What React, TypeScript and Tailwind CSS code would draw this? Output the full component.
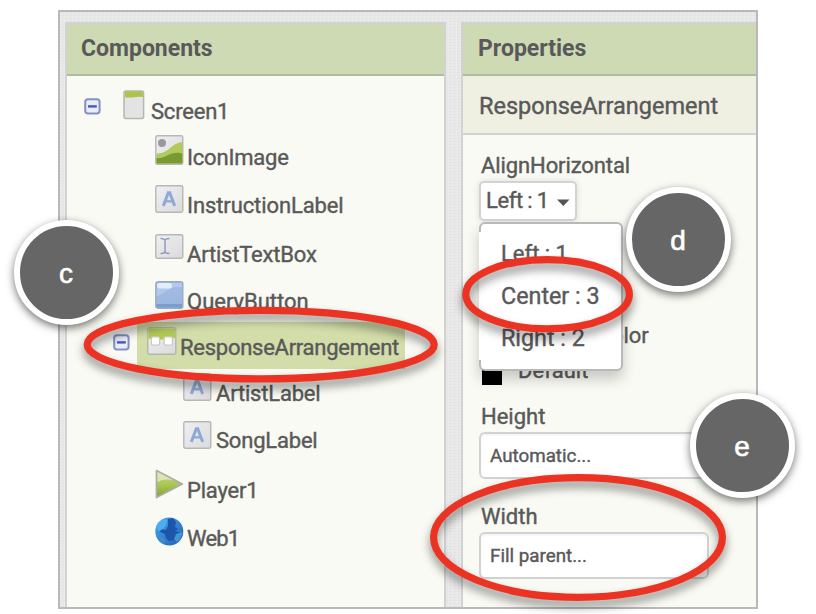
import React from "react";

const FrameBox = ({ h = 28 }: { h?: number }) => (
  <rect x="0.8" y="0.8" width="27" height={h - 1.6} rx="1.6" fill="url(#greyFill)" stroke="#b7b7b9" strokeWidth="1.4" />
);

function Icon({ kind }: { kind: string }) {
  switch (kind) {
    case "screen":
      return (
        <svg width="22" height="30" viewBox="0 0 22 30">
          <rect x="1" y="1" width="19.6" height="27.6" rx="2" fill="#e3e3e3" stroke="#b5b6b0" strokeWidth="1.5" />
          <path d="M2 1.5H19.8V7Q15 6.5 11 7.2Q6 8 2 7.2Z" fill="#adc44c" />
        </svg>
      );
    case "image":
      return (
        <svg width="29" height="30" viewBox="0 0 29 30">
          <FrameBox h={30} />
          <circle cx="7" cy="8" r="4" fill="#9a9a9a" />
          <path d="M1.5 18.5C8 19 13 15 17 11.5C21 8.500 24 7.500 27.300 7V28.300H1.500Z" fill="#b0ca5b" />
          <path d="M1.500 23C8 24 12 20 17 18.500C21 17.500 25 17.500 27.300 18.500V28.500H1.500Z" fill="#789a31" />
        </svg>
      );
    case "label":
      return (
        <svg width="29" height="28" viewBox="0 0 29 28">
          <FrameBox />
          <g fill="none" stroke="#8fa9d6" strokeWidth="3">
            <line x1="8.300" y1="21" x2="13.700" y2="6.500" />
            <line x1="14.300" y1="6.500" x2="19.700" y2="21" />
            <line x1="10" y1="16.300" x2="18" y2="16.300" strokeWidth="2.300" />
          </g>
        </svg>
      );
    case "textbox":
      return (
        <svg width="29" height="25" viewBox="0 0 29 25">
          <FrameBox h={25} />
          <path d="M5.500 4.500Q9 4.500 10 6Q11 4.500 14.500 4.500M10 6V18M5.500 19.500Q9 19.500 10 18Q11 19.500 14.500 19.500" fill="none" stroke="#8c9dbb" strokeWidth="1.500" />
        </svg>
      );
    case "button":
      return (
        <svg width="29" height="28" viewBox="0 0 29 28">
          <rect x="0.800" y="0.800" width="27" height="26.400" rx="2" fill="url(#blueFill)" stroke="#9aaac4" strokeWidth="1.400" />
          <path d="M1.500 15C8 14 12 8 20 6H27V2H2Z" fill="#bdd0ee" opacity=".65" />
          <rect x="2" y="2" width="15" height="5.500" rx="2.700" fill="#e3ecfa" />
          <rect x="1.500" y="23" width="25.600" height="3.500" fill="#7a9dd1" />
        </svg>
      );
    case "arrangement":
      return (
        <svg width="30" height="28" viewBox="0 0 30 28">
          <rect x="0.800" y="0.800" width="28" height="26.400" rx="2" fill="url(#greyFill)" stroke="#b3b7a8" strokeWidth="1.400" />
          <path d="M1.500 1.500H28V11Q22 12 15 12.500Q8 14 1.500 11.500Z" fill="#b2c954" />
          <rect x="3.800" y="9.300" width="9.400" height="9.400" rx="2" fill="#c9cbc2" />
          <rect x="16.600" y="9.300" width="9.400" height="9.400" rx="2" fill="#c9cbc2" />
          <rect x="5" y="10.500" width="7" height="7" rx="1" fill="#fff" />
          <rect x="17.800" y="10.500" width="7" height="7" rx="1" fill="#fff" />
        </svg>
      );
    case "player":
      return (
        <svg width="29" height="30" viewBox="0 0 29 30">
          <path d="M1.500 1.500L27.300 15L1.500 28.500Z" fill="url(#playFill)" stroke="#abaea5" strokeWidth="1.700" strokeLinejoin="round" />
          <path d="M2.500 3L19 11.500Q10 9 2.500 13Z" fill="#e9f0d0" opacity=".7" />
        </svg>
      );
    default:
      return (
        <svg width="29" height="29" viewBox="0 0 29 29">
          <circle cx="14.300" cy="14.500" r="14" fill="url(#globeFill)" />
          <path d="M13 2L18 1L21 5L20 10L23 12L20 14L26 16L22 18L20 23L14 24L11 21L10 17L5 15L6 12L11 13L13 9Z" fill="#1d55a8" />
          <path d="M1 11L4 14L8 12L11 8L12 3L9 2Q2 5 1 11Z" fill="#4baef3" />
          <path d="M21 17L27 15Q27 21 22 25L19 22Z" fill="#4194d6" />
          <path d="M3 19L9 22L11 26L8 26Q4 23 3 19Z" fill="#3a8fd4" />
        </svg>
      );
  }
}

const Toggle = () => (
  <svg width="17" height="17" viewBox="0 0 17 17">
    <rect x="1.200" y="1.200" width="14.400" height="14.400" rx="2.800" fill="#e9ecf5" stroke="#8391c4" strokeWidth="2" />
    <line x1="4" y1="8.400" x2="12.800" y2="8.400" stroke="#4357cc" strokeWidth="2.400" />
  </svg>
);

// Row height and indent, icon column, optional expander and text tracking for each tree entry.
const rows = [
  { name: "Screen1", kind: "screen", row: "h-[50px] pl-[17px]", icon: "w-[28px] mb-[6px]", toggle: "w-[39px] mb-[11px]", text: "tracking-[-0.2px]" },
  { name: "IconImage", kind: "image", row: "h-[46px] pl-[88px]", icon: "w-[32px] mb-[7px]", text: "tracking-[-0.2px]" },
  { name: "InstructionLabel", kind: "label", row: "h-[48px] pl-[88px]", icon: "w-[32px] mb-[7px]", text: "tracking-[-0.1px]" },
  { name: "ArtistTextBox", kind: "textbox", row: "h-[49px] pl-[88px]", icon: "w-[32px] mb-[10px]", text: "tracking-[-0.2px]" },
  { name: "QueryButton", kind: "button", row: "h-[47px] pl-[88px]", icon: "w-[32px] mb-[7px]", text: "" },
  { name: "ResponseArrangement", kind: "arrangement", row: "h-[53px] pl-[46px]", icon: "w-[33px] mb-[7px]", toggle: "w-[24px] mb-[18px]", selected: true, text: "tracking-[-0.26px]" },
  { name: "ArtistLabel", kind: "label", row: "h-[39px] pl-[116px]", icon: "w-[33px] mb-[7px]", text: "tracking-[-0.2px]" },
  { name: "SongLabel", kind: "label", row: "h-[47px] pl-[116px]", icon: "w-[33px] mb-[6px]", text: "tracking-[-0.2px]" },
  { name: "Player1", kind: "player", row: "h-[50px] pl-[88px]", icon: "w-[32px] mb-[6px]", text: "tracking-[-0.2px]" },
  { name: "Web1", kind: "web", row: "h-[48px] pl-[88px]", icon: "w-[32px] mb-[7px]", text: "tracking-[-0.8px]" },
];

const Callout = ({ letter, place }: { letter: string; place: string }) => (
  <div className={`absolute flex h-[105px] w-[105px] items-center justify-center rounded-full border-[6.5px] border-white bg-[#666] pt-[3px] pr-px font-['Liberation_Sans',sans-serif] text-[28px] text-white shadow-[0_3px_9px_rgba(0,0,0,0.55)] [-webkit-text-stroke:0.6px] ${place}`}>
    {letter}
  </div>
);

const SizeField = ({ value }: { value: string }) => (
  <div className="mt-px flex h-[47px] w-[230px] items-center rounded-[6px] border-2 border-[#d2d2d2] bg-white pl-[9px] text-[18.8px] shadow-[inset_0_2px_2px_rgba(0,0,0,0.04)]">{value}</div>
);

export default function App() {
  return (
    <div className="relative h-[614px] w-[816px] overflow-hidden bg-white pl-[58px] pt-[10px] font-['Roboto',sans-serif] text-[22px] leading-[28px] text-[#595959] [-webkit-text-stroke:0.4px]">
      <div className="flex h-[599px] w-[700px] border-2 border-[#b9b9b9] bg-[#e8e8e8] bg-[repeating-linear-gradient(0deg,rgba(0,0,0,0.02)_0_1px,transparent_1px_3px),repeating-linear-gradient(90deg,rgba(255,255,255,0.2)_0_1px,transparent_1px_4px)] pl-[5px] pt-[10px]">
        <section className="w-[381px] shrink-0 border-x-2 border-t-2 border-[#d2d2d2] bg-[#f9faf3]">
          <h2 className="h-[52px] border-b-2 border-[#b4b9a5] bg-[#cedab3] pl-[14px] pt-[11px] text-[23px] font-bold [-webkit-text-stroke:0px]">Components</h2>
          <ul>
            {rows.map((r) => (
              <li key={r.name} className={`flex items-end ${r.row}`}>
                {r.toggle && <span className={`shrink-0 ${r.toggle}`}><Toggle /></span>}
                <div className={r.selected ? "flex h-[47px] w-[268px] items-end bg-[#d3dda9] pb-[7px] pl-[10px]" : "flex items-end"}>
                  <span className={`shrink-0 ${r.icon}`}><Icon kind={r.kind} /></span>
                  <span className={`whitespace-nowrap ${r.text}`}>{r.name}</span>
                </div>
              </li>
            ))}
          </ul>
        </section>

        <section className="ml-[15px] flex-1 border-l-2 border-t-2 border-[#d2d2d2] bg-[#f9faf3]">
          <h2 className="h-[52px] border-b-2 border-[#b4b9a5] bg-[#cedab3] pl-[15px] pt-[11px] text-[23px] font-bold [-webkit-text-stroke:0px]">Properties</h2>
          <div className="h-[59px] border-b-2 border-[#d2d2d0] bg-[#eff0e1] pl-[16px] pt-[16px] text-[23.5px]">ResponseArrangement</div>
          <div className="pl-[16px] pt-[17px]">
            <div className="h-[29px] pl-[2px] tracking-[-0.1px]">AlignHorizontal</div>
            <button className="flex h-[40px] w-[98px] items-center rounded-[5px] border-2 border-[#d3d3d3] bg-white pl-[5px] shadow-[0_0_6px_rgba(0,0,0,0.12)]">
              <span className="w-[71px] whitespace-nowrap text-left tracking-[-0.4px] [word-spacing:-0.5px]">Left : 1</span>
              <svg className="mt-[4px] shrink-0" width="13" height="8" viewBox="0 0 13 8"><path d="M0 .5H12.500L6.300 7Z" fill="#555" /></svg>
            </button>
            <div className="mt-[101px] h-[28px] w-[166px] pl-[2px] text-right tracking-[-0.1px]">BackgroundColor</div>
            <div className="mt-[7px] flex pl-[3px]">
              <span className="mt-[8px] h-[20px] w-[20px] bg-black" />
              <span className="ml-[16px]">Default</span>
            </div>
            <div className="mt-[18px] pl-[2px]">Height</div>
            <SizeField value="Automatic..." />
            <div className="mt-[24px] pl-[2px]">Width</div>
            <SizeField value="Fill parent..." />
          </div>
        </section>
      </div>

      <div className="absolute left-[479px] top-[222px] h-[149px] w-[144px] rounded-[6px] border-2 border-[#b9b9b9] bg-white pl-[20px] pt-[16px] shadow-[0_8px_14px_rgba(0,0,0,0.2)]">
        <span className="absolute -left-[2px] top-[8px] h-[128px] w-[3px] bg-white" />
        <div className="h-[42px]">Left : 1</div>
        <div className="h-[42px] text-[23.3px]">Center : 3</div>
        <div className="text-[23.3px]">Right : 2</div>
      </div>

      <svg className="absolute left-0 top-0 drop-shadow-[0_6px_5px_rgba(0,0,0,0.45)]" width="816" height="614" viewBox="0 0 816 614" fill="none" stroke="#ec3323" strokeWidth="7.200">
        <defs>
          <linearGradient id="greyFill" x1="0" y1="0" x2="1" y2="1"><stop stopColor="#f0f0f2" /><stop offset="1" stopColor="#dadadc" /></linearGradient>
          <linearGradient id="blueFill" x1="0" y1="0" x2="0" y2="1"><stop stopColor="#a2bbe2" /><stop offset="1" stopColor="#9bb6df" /></linearGradient>
          <linearGradient id="playFill" x1="0" y1="0" x2="0" y2="1"><stop stopColor="#c6d889" /><stop offset=".55" stopColor="#a9c551" /><stop offset="1" stopColor="#83a238" /></linearGradient>
          <linearGradient id="globeFill" x1="0" y1="0" x2="1" y2="1"><stop stopColor="#47a6ee" /><stop offset="1" stopColor="#2361b0" /></linearGradient>
        </defs>
        <ellipse cx="260.700" cy="344.600" rx="173.500" ry="34.300" />
        <ellipse cx="547.600" cy="294.200" rx="81.800" ry="34.600" />
        <ellipse cx="578" cy="537.500" rx="144.400" ry="59.800" />
      </svg>

      <Callout letter="c" place="left-[14px] top-[220px]" />
      <Callout letter="d" place="left-[626px] top-[187px]" />
      <Callout letter="e" place="left-[690px] top-[393px]" />
    </div>
  );
}
